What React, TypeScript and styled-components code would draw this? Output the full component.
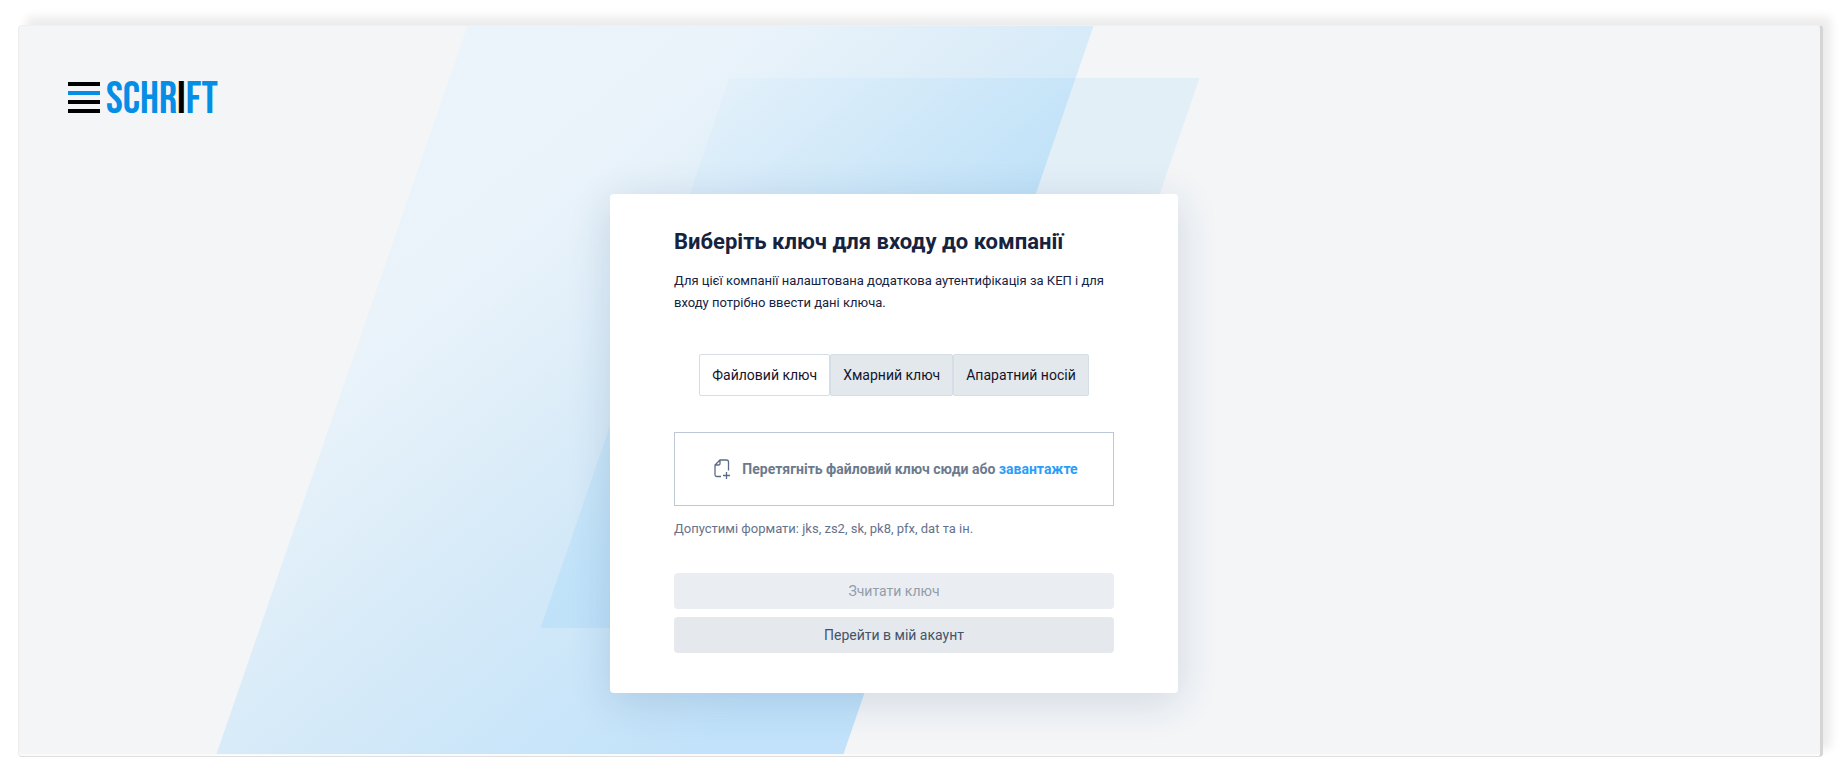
import React, { useRef, useState } from "react";
import styled, { createGlobalStyle } from "styled-components";

const GlobalStyle = createGlobalStyle`
  *, *::before, *::after { box-sizing: border-box; }
  body {
    margin: 0;
    background: #ffffff;
    color: #16233f;
    font-family: Roboto, "Liberation Sans", sans-serif;
  }
  button { font-family: inherit; }
`;

const Page = styled.div`
  display: flex;
  min-height: 100vh;
  padding: 25px 24px 22px 18px;
`;

const Panel = styled.div`
  position: relative;
  isolation: isolate;
  display: flex;
  flex-direction: column;
  flex: 1;
  border: 1px solid #ececec;
  border-top-color: #f0f0f1;
  border-right: 3px solid #d5d5d5;
  border-bottom-color: #dedfe0;
  border-radius: 4px;
  background: #f3f5f7;
  box-shadow: inset 0 -2px 0 #fbfbfc, 8px -8px 10px rgba(0, 0, 0, 0.08);
`;

const Backdrop = styled.svg`
  position: absolute;
  z-index: -1;
  top: 0;
  left: 0;
  width: 100%;
  height: calc(100% - 2px);
`;

const Header = styled.header`
  display: flex;
  padding: 54px 49px 0;
`;

const Brand = styled.a`
  display: flex;
  align-items: center;
  gap: 6px;
  height: 34px;
  text-decoration: none;
`;

const BrandName = styled.span`
  padding-top: 6px;
  color: #068de6;
  font: 45px/34px "Bebas Neue", "Liberation Sans Narrow", "Roboto Condensed", "DejaVu Sans Condensed", sans-serif;
`;

const BrandAccent = styled.span`
  color: #000000;
`;

const Main = styled.main`
  display: flex;
  justify-content: center;
  padding: 80px 100px 56px 49px;
`;

const Card = styled.section`
  width: 568px;
  padding: 32px 64px 40px;
  border-radius: 4px;
  background: #ffffff;
  box-shadow: 0 8px 40px rgba(30, 70, 120, 0.16);
`;

const Title = styled.h1`
  margin: 0;
  color: #16233f;
  font-size: 22px;
  font-weight: 700;
  line-height: 32px;
`;

const Lead = styled.p`
  margin: 12px 0 0;
  font-size: 13px;
  line-height: 22px;
`;

const Tabs = styled.div`
  display: flex;
  justify-content: center;
  margin-top: 40px;
`;

const Tab = styled.button<{ $active: boolean }>`
  height: 42px;
  padding: 0 12px;
  border: 1px solid #d5dde8;
  border-radius: 2px;
  background: ${(p) => (p.$active ? "#ffffff" : "#e3e8ec")};
  color: #14142b;
  font-size: 14px;
  cursor: pointer;
`;

const DropZone = styled.div`
  display: flex;
  align-items: center;
  justify-content: center;
  gap: 12px;
  height: 74px;
  margin-top: 36px;
  padding-left: 4px;
  border: 1px solid #bcc7d8;
  color: #6b7a8c;
  font-size: 14px;
  font-weight: 700;
`;

const FileIcon = styled.svg`
  width: 16px;
  height: 20px;
`;

const UploadButton = styled.button`
  padding: 0;
  border: 0;
  background: none;
  color: #2a9dfa;
  font-size: 14px;
  font-weight: 700;
  cursor: pointer;
`;

const Hint = styled.p`
  margin: 12px 0 0;
  color: #66728a;
  font-size: 13px;
  line-height: 22px;
`;

const Actions = styled.div`
  display: grid;
  gap: 8px;
  margin-top: 33px;
`;

const ActionButton = styled.button`
  height: 36px;
  border: 0;
  border-radius: 4px;
  background: #e5e9ee;
  color: #44536a;
  font-size: 14px;
  cursor: pointer;

  &:disabled {
    background: #eaeef3;
    color: #929daa;
    cursor: default;
  }
`;

const KEY_KINDS = ["Файловий ключ", "Хмарний ключ", "Апаратний носій"];

function BackgroundBands() {
  return (
    <Backdrop viewBox="0 0 1802 728" preserveAspectRatio="xMidYMid slice" aria-hidden="true">
      <defs>
        <linearGradient id="wide" gradientUnits="userSpaceOnUse" x1="449" y1="0" x2="898" y2="541">
          <stop offset="0" stopColor="#ebf4fb" />
          <stop offset="0.26" stopColor="#eaf3fa" />
          <stop offset="0.6" stopColor="#d6eaf8" />
          <stop offset="1" stopColor="#c1e2fa" />
        </linearGradient>
        <linearGradient id="narrow" gradientUnits="userSpaceOnUse" x1="700" y1="60" x2="880" y2="276">
          <stop offset="0" stopColor="#b4dffa" stopOpacity="0.1" />
          <stop offset="1" stopColor="#a6d8fa" stopOpacity="0.38" />
        </linearGradient>
      </defs>
      <path d="M1024 52H1181L992 602H878Z" fill="#e3eff7" />
      <path d="M449 0H1075L825 728H198Z" fill="url(#wide)" />
      <path d="M711 52H1057L868 602H522Z" fill="url(#narrow)" />
    </Backdrop>
  );
}

function LogoBars() {
  return (
    <svg width="32" height="32" viewBox="0 0 32 32" aria-hidden="true">
      <path d="M0 3H32M0 21H32M0 30H32" stroke="#000000" strokeWidth="4" />
      <path d="M0 12H32" stroke="#068de6" strokeWidth="4" />
    </svg>
  );
}

export default function App() {
  const [kind, setKind] = useState(0);
  const fileInput = useRef<HTMLInputElement>(null);

  return (
    <>
      <GlobalStyle />
      <Page>
        <Panel>
          <BackgroundBands />
          <Header>
            <Brand href="#">
              <LogoBars />
              <BrandName>
                SCHR<BrandAccent>I</BrandAccent>FT
              </BrandName>
            </Brand>
          </Header>
          <Main>
            <Card>
              <Title>Виберіть ключ для входу до компанії</Title>
              <Lead>
                Для цієї компанії налаштована додаткова аутентифікація за КЕП і для входу потрібно ввести дані ключа.
              </Lead>
              <Tabs role="tablist">
                {KEY_KINDS.map((name, i) => (
                  <Tab key={name} type="button" role="tab" aria-selected={i === kind} $active={i === kind} onClick={() => setKind(i)}>
                    {name}
                  </Tab>
                ))}
              </Tabs>
              <DropZone>
                <FileIcon viewBox="0 0 16 20" fill="none" stroke="#5a6b88" strokeWidth="1.3" aria-hidden="true">
                  <path d="M7 17.500H3Q1 17.500 1 15.500V6L6 1H12.500Q14.500 1 14.500 3V11.500M1.500 6H4.500Q6 6 6 4.500V1.500" />
                  <path d="M9 16.500H16M12.500 13V20" />
                </FileIcon>
                <span>
                  Перетягніть файловий ключ сюди або{" "}
                  <UploadButton type="button" onClick={() => fileInput.current?.click()}>
                    завантажте
                  </UploadButton>
                </span>
                <input ref={fileInput} type="file" hidden />
              </DropZone>
              <Hint>Допустимі формати: jks, zs2, sk, pk8, pfx, dat та ін.</Hint>
              <Actions>
                <ActionButton type="button" disabled>
                  Зчитати ключ
                </ActionButton>
                <ActionButton type="button">Перейти в мій акаунт</ActionButton>
              </Actions>
            </Card>
          </Main>
        </Panel>
      </Page>
    </>
  );
}
